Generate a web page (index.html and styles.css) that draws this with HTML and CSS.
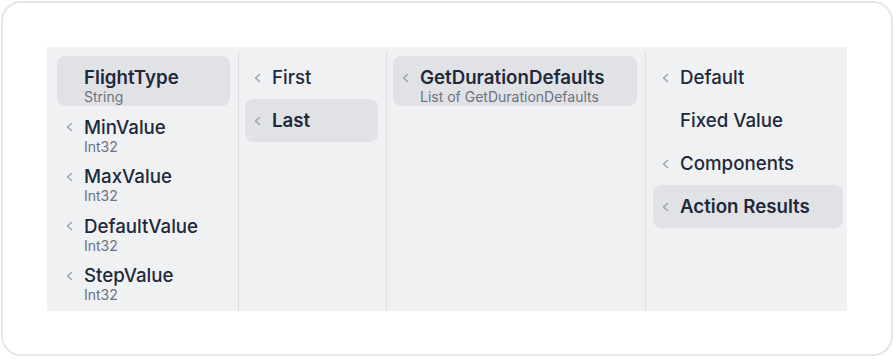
FILE: index.html
```html
<!DOCTYPE html>
<html>
<head>
<meta charset="utf-8">
<link rel="stylesheet" href="styles.css">
</head>
<body>
<div class="card">
  <div class="panel">
    <div class="col col-1">
      <div class="item two selected">
        <span class="chev-space"></span>
        <div class="text"><div class="title">FlightType</div><div class="sub">String</div></div>
      </div>
      <div class="item two">
        <svg class="chev" viewBox="0 0 7 10"><polyline points="5.5,1.5 1.5,5 5.5,8.5"/></svg>
        <div class="text"><div class="title">MinValue</div><div class="sub">Int32</div></div>
      </div>
      <div class="item two">
        <svg class="chev" viewBox="0 0 7 10"><polyline points="5.5,1.5 1.5,5 5.5,8.5"/></svg>
        <div class="text"><div class="title">MaxValue</div><div class="sub">Int32</div></div>
      </div>
      <div class="item two">
        <svg class="chev" viewBox="0 0 7 10"><polyline points="5.5,1.5 1.5,5 5.5,8.5"/></svg>
        <div class="text"><div class="title">DefaultValue</div><div class="sub">Int32</div></div>
      </div>
      <div class="item two">
        <svg class="chev" viewBox="0 0 7 10"><polyline points="5.5,1.5 1.5,5 5.5,8.5"/></svg>
        <div class="text"><div class="title">StepValue</div><div class="sub">Int32</div></div>
      </div>
    </div>
    <div class="col col-2">
      <div class="item">
        <svg class="chev" viewBox="0 0 7 10"><polyline points="5.5,1.5 1.5,5 5.5,8.5"/></svg>
        <div class="text"><div class="title">First</div></div>
      </div>
      <div class="item selected">
        <svg class="chev" viewBox="0 0 7 10"><polyline points="5.5,1.5 1.5,5 5.5,8.5"/></svg>
        <div class="text"><div class="title">Last</div></div>
      </div>
    </div>
    <div class="col col-3">
      <div class="item two selected">
        <svg class="chev" viewBox="0 0 7 10"><polyline points="5.5,1.5 1.5,5 5.5,8.5"/></svg>
        <div class="text"><div class="title">GetDurationDefaults</div><div class="sub">List of GetDurationDefaults</div></div>
      </div>
    </div>
    <div class="col col-4">
      <div class="item">
        <svg class="chev" viewBox="0 0 7 10"><polyline points="5.5,1.5 1.5,5 5.5,8.5"/></svg>
        <div class="text"><div class="title">Default</div></div>
      </div>
      <div class="item">
        <span class="chev-space"></span>
        <div class="text"><div class="title">Fixed Value</div></div>
      </div>
      <div class="item">
        <svg class="chev" viewBox="0 0 7 10"><polyline points="5.5,1.5 1.5,5 5.5,8.5"/></svg>
        <div class="text"><div class="title">Components</div></div>
      </div>
      <div class="item selected">
        <svg class="chev" viewBox="0 0 7 10"><polyline points="5.5,1.5 1.5,5 5.5,8.5"/></svg>
        <div class="text"><div class="title">Action Results</div></div>
      </div>
    </div>
  </div>
</div>
</body>
</html>
```

FILE: styles.css
```css
* { box-sizing: border-box; }
html, body { margin: 0; padding: 0; background: #ffffff; }
body { font-family: Inter, "Noto Sans", sans-serif; }

.card {
  margin: 1px;
  width: 892px;
  height: 355px;
  border: 2px solid #e4e6ea;
  border-radius: 20px;
  padding: 44px;
  background: #ffffff;
}

.panel {
  display: flex;
  width: 800px;
  height: 264px;
  background: #f0f1f3;
  padding-top: 4px;
}

.col {
  display: flex;
  flex-direction: column;
  padding-top: 5px;
  border-right: 1px solid #dcdee2;
}
.col-1 { width: 192px; padding-left: 10px; padding-right: 8px; }
.col-2 { width: 148px; padding-left: 6px; padding-right: 8px; }
.col-3 { width: 259px; padding-left: 6px; padding-right: 8px; }
.col-4 { width: 201px; padding-left: 7px; padding-right: 4px; border-right: none; }

.item {
  display: flex;
  align-items: flex-start;
  height: 43px;
  padding: 10.5px 8px 0 9px;
  border-radius: 8px;
  flex-shrink: 0;
}
.item.two { height: 49.6px; padding-top: 11px; }
.item.selected { background: #e1e2e6; }

.chev, .chev-space {
  width: 7px;
  height: 10px;
  margin-top: 6.5px;
  margin-right: 11px;
  flex-shrink: 0;
}
.two .chev, .two .chev-space { margin-top: 5.5px; }
.chev polyline {
  fill: none;
  stroke: #9ca3af;
  stroke-width: 1.5;
  stroke-linecap: round;
  stroke-linejoin: round;
}

.title {
  font-size: 18.7px;
  line-height: 22.6px;
  font-weight: 500;
  color: #1e293b;
  white-space: nowrap;
}
.two .title { line-height: 21px; }
.selected .title { font-weight: 600; }
.sub {
  font-size: 14px;
  line-height: 17px;
  color: #6b7280;
  white-space: nowrap;
}
```
